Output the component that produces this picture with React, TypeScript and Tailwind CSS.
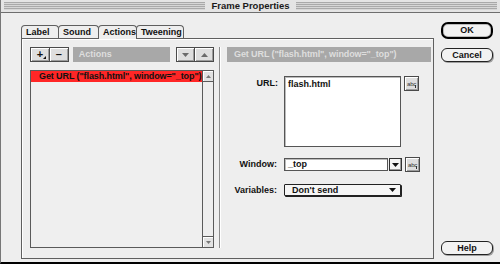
import React from 'react'

const font = "font-['Liberation_Sans',Arial,sans-serif]"
const bevel =
  'border border-[#4a4a4a] bg-[#dedede] shadow-[inset_1px_1px_0_#ffffff,inset_-1px_-1px_0_#9c9c9c]'

function Tri({ up = false, color = '#555555', w = 7 }: { up?: boolean; color?: string; w?: number }) {
  const h = Math.ceil(w / 2)
  return (
    <svg width={w} height={h} viewBox={`0 0 ${w} ${h}`}>
      <polygon points={up ? `0,${h} ${w},${h} ${w / 2},0` : `0,0 ${w},0 ${w / 2},${h}`} fill={color} />
    </svg>
  )
}

function AbcButton() {
  return (
    <div className={`relative flex h-[15px] w-[15px] items-center justify-center ${bevel}`}>
      <span className="text-[6px] leading-none font-normal tracking-[-0.3px] text-[#333]">abc</span>
      <span className="absolute right-[2px] bottom-[2px] h-[3px] w-[1px] bg-[#333]" />
    </div>
  )
}

function Tab({ label, width, active }: { label: string; width: string; active?: boolean }) {
  return (
    <div
      className={`-ml-px flex h-[13px] items-center rounded-t-[4px] border border-b-0 border-[#5f5f5f] bg-[#eeeeee] pl-[4px] ${width} ${
        active ? 'relative z-10 -mb-px h-[14px]' : ''
      }`}
    >
      {label}
    </div>
  )
}

function MacButton({ label, def }: { label: string; def?: boolean }) {
  if (def) {
    return (
      <div className="flex h-[17px] items-center justify-center rounded-[7px] border-2 border-black bg-[#f2f2f2] shadow-[inset_0_0_0_1px_#bbbbbb]">
        {label}
      </div>
    )
  }
  return (
    <div className="flex h-[14px] items-center justify-center rounded-[6px] border border-[#222] bg-[#f2f2f2] shadow-[1px_1px_0_#a0a0a0]">
      {label}
    </div>
  )
}

export default function App() {
  return (
    <div
      className={`flex h-[264px] w-[500px] flex-col overflow-hidden border-b-2 border-l border-b-black border-l-[#777] bg-[#eeeeee] text-[9px] leading-none font-bold text-[#111] ${font}`}
    >
      {/* Title bar */}
      <div className="flex h-[13px] shrink-0 items-center border-b border-[#6e6e6e] bg-[#e4e4e4] px-[3px]">
        <div className="h-[8px] flex-1 bg-[repeating-linear-gradient(to_bottom,#a9a9a9_0px,#a9a9a9_1px,#d6d6d6_1px,#d6d6d6_2px)]" />
        <div className="px-[6px] text-[9.5px] text-[#1a1a1a]">Frame Properties</div>
        <div className="h-[8px] flex-1 bg-[repeating-linear-gradient(to_bottom,#a9a9a9_0px,#a9a9a9_1px,#d6d6d6_1px,#d6d6d6_2px)]" />
      </div>

      <div className="flex flex-1">
        {/* Tabs + panel */}
        <div className="w-[433px] pt-[12px] pl-[20px]">
          <div className="flex items-end pl-px">
            <Tab label="Label" width="w-[38px]" />
            <Tab label="Sound" width="w-[41px]" />
            <Tab label="Actions" width="w-[39px]" active />
            <Tab label="Tweening" width="w-[48px]" />
          </div>
          <div className="flex h-[221px] w-[413px] border border-[#5f5f5f] pt-[8px] pl-[8px] shadow-[inset_1px_1px_0_#ffffff]">
            {/* Left column */}
            <div className="w-[184px]">
              <div className="flex h-[15px]">
                <div className={`relative flex w-[20px] items-center justify-center text-[11px] ${bevel}`}>
                  +
                  <span className="absolute right-[3px] bottom-[2px]">
                    <svg width="3" height="3" viewBox="0 0 3 3">
                      <polygon points="3,0 3,3 0,3" fill="#111" />
                    </svg>
                  </span>
                </div>
                <div className={`-ml-px flex w-[20px] items-center justify-center text-[11px] ${bevel}`}>–</div>
                <div className="ml-[4px] flex w-[98px] items-center bg-[#a8a8a8] pl-[6px] text-[#dedede]">Actions</div>
                <div className={`ml-[6px] flex w-[19px] items-center justify-center ${bevel}`}>
                  <Tri color="#6a6a6a" />
                </div>
                <div className={`-ml-px flex w-[20px] items-center justify-center ${bevel}`}>
                  <Tri up color="#6a6a6a" />
                </div>
              </div>

              {/* Action list */}
              <div className="mt-[8px] flex h-[178px] border border-[#5a5a5a] bg-[#efefef]">
                <div className="flex-1">
                  <div className="flex h-[11px] items-center bg-[#ff2626] pl-[8px] tracking-[-0.1px] whitespace-nowrap text-[#111]">
                    Get URL ("flash.html", window="_top")
                  </div>
                </div>
                <div className="flex w-[11px] flex-col justify-between border-l border-[#5a5a5a] bg-[#eeeeee]">
                  <div className="flex h-[11px] items-center justify-center border-b border-[#5a5a5a] bg-[#e2e2e2] shadow-[inset_1px_1px_0_#ffffff]">
                    <Tri up w={5} color="#777" />
                  </div>
                  <div className="flex h-[11px] items-center justify-center border-t border-[#5a5a5a] bg-[#e2e2e2] shadow-[inset_1px_1px_0_#ffffff]">
                    <Tri w={5} color="#777" />
                  </div>
                </div>
              </div>
            </div>

            {/* Divider */}
            <div className="ml-[5px] h-[201px] w-[2px] border-l border-r border-l-[#8c8c8c] border-r-white" />

            {/* Right column */}
            <div className="ml-[6px] w-[204px]">
              <div className="flex h-[15px] items-center bg-[#a8a8a8] pl-[7px] tracking-[-0.1px] whitespace-nowrap text-[#dedede]">
                Get URL ("flash.html", window="_top")
              </div>

              <div className="mt-[14px] flex items-start">
                <div className="w-[51px] pt-[3px] text-right">URL:</div>
                <div className="ml-[6px] h-[71px] w-[117px] border border-[#555] bg-white pt-[3px] pl-[3px] shadow-[inset_1px_1px_0_#bbbbbb]">
                  flash.html
                </div>
                <div className="ml-[3px]">
                  <AbcButton />
                </div>
              </div>

              <div className="mt-[10px] flex items-center">
                <div className="w-[50px] text-right">Window:</div>
                <div className="ml-[7px] flex h-[13px] w-[104px] items-center border border-[#555] bg-white pl-[3px] shadow-[inset_1px_1px_0_#bbbbbb]">
                  _top
                </div>
                <div className="ml-[1px] flex h-[13px] w-[13px] items-center justify-center border border-[#333] bg-[#f4f4f4] shadow-[inset_-1px_-1px_0_#999]">
                  <Tri color="#111" w={7} />
                </div>
                <div className="ml-[3px]">
                  <AbcButton />
                </div>
              </div>

              <div className="mt-[12px] flex items-center">
                <div className="w-[50px] text-right">Variables:</div>
                <div className="ml-[7px] flex h-[12px] w-[117px] items-center justify-between rounded-[1px] border border-[#222] bg-[#f6f6f6] pr-[4px] pl-[7px] shadow-[1px_1px_0_#222]">
                  <span>Don't send</span>
                  <Tri color="#111" w={7} />
                </div>
              </div>
            </div>
          </div>
        </div>

        {/* Dialog buttons */}
        <div className="ml-[7px] flex w-[52px] flex-col pt-[9px] pb-[7px]">
          <MacButton label="OK" def />
          <div className="mt-[9px]">
            <MacButton label="Cancel" />
          </div>
          <div className="mt-auto">
            <MacButton label="Help" />
          </div>
        </div>
      </div>
    </div>
  )
}
